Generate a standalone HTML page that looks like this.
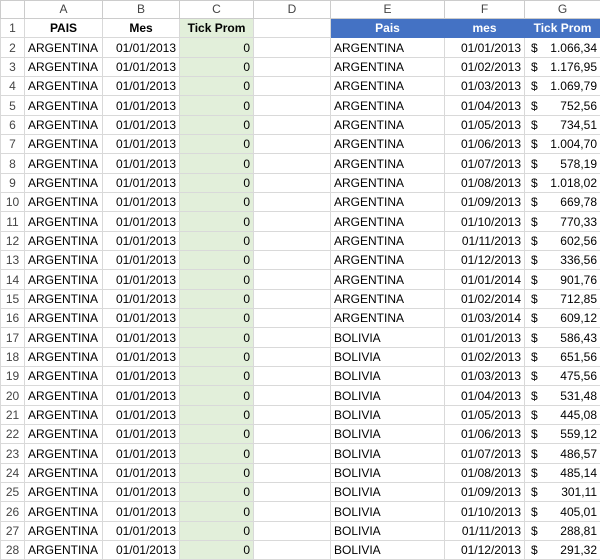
<!DOCTYPE html><html><head><style>
body{margin:0;width:600px;height:551px;overflow:hidden;background:#fff;font-family:"Liberation Sans",Arial,sans-serif;font-size:12px;color:#000}
table{border-collapse:collapse;table-layout:fixed;width:600px}
td{border:1px solid #d9d9d9;padding:0 3px;white-space:nowrap;overflow:hidden;height:18px;line-height:18px}
tr.t td{height:19px}
tr.h td{color:#444;text-align:center;font-size:12px;border-color:#ccc;height:17px;line-height:17px}
td.n{color:#444;text-align:center;font-size:12px;padding:0}
td.r{text-align:right}
td.g{background:#e2efda;text-align:right}
td.b{font-weight:bold;text-align:center}
td.bl{background:#4472c4;color:#fff;font-weight:bold;text-align:center;border-color:#4472c4}
td.d span{float:left;padding-left:3px}
td.d{text-align:right}
</style></head><body>
<table>
<colgroup><col style="width:24px"><col style="width:78px"><col style="width:77px"><col style="width:74px"><col style="width:77px"><col style="width:114px"><col style="width:80px"><col style="width:76px"></colgroup>
<tr class="h"><td></td><td>A</td><td>B</td><td>C</td><td>D</td><td>E</td><td>F</td><td>G</td></tr>
<tr><td class="n">1</td><td class="b">PAIS</td><td class="b">Mes</td><td class="b" style="background:#e2efda">Tick Prom</td><td></td><td class="bl">Pais</td><td class="bl">mes</td><td class="bl">Tick Prom</td></tr>
<tr class="t"><td class="n">2</td><td>ARGENTINA</td><td class="r">01/01/2013</td><td class="g">0</td><td></td><td>ARGENTINA</td><td class="r">01/01/2013</td><td class="d"><span>$</span>1.066,34</td></tr>
<tr><td class="n">3</td><td>ARGENTINA</td><td class="r">01/01/2013</td><td class="g">0</td><td></td><td>ARGENTINA</td><td class="r">01/02/2013</td><td class="d"><span>$</span>1.176,95</td></tr>
<tr><td class="n">4</td><td>ARGENTINA</td><td class="r">01/01/2013</td><td class="g">0</td><td></td><td>ARGENTINA</td><td class="r">01/03/2013</td><td class="d"><span>$</span>1.069,79</td></tr>
<tr class="t"><td class="n">5</td><td>ARGENTINA</td><td class="r">01/01/2013</td><td class="g">0</td><td></td><td>ARGENTINA</td><td class="r">01/04/2013</td><td class="d"><span>$</span>752,56</td></tr>
<tr><td class="n">6</td><td>ARGENTINA</td><td class="r">01/01/2013</td><td class="g">0</td><td></td><td>ARGENTINA</td><td class="r">01/05/2013</td><td class="d"><span>$</span>734,51</td></tr>
<tr><td class="n">7</td><td>ARGENTINA</td><td class="r">01/01/2013</td><td class="g">0</td><td></td><td>ARGENTINA</td><td class="r">01/06/2013</td><td class="d"><span>$</span>1.004,70</td></tr>
<tr class="t"><td class="n">8</td><td>ARGENTINA</td><td class="r">01/01/2013</td><td class="g">0</td><td></td><td>ARGENTINA</td><td class="r">01/07/2013</td><td class="d"><span>$</span>578,19</td></tr>
<tr><td class="n">9</td><td>ARGENTINA</td><td class="r">01/01/2013</td><td class="g">0</td><td></td><td>ARGENTINA</td><td class="r">01/08/2013</td><td class="d"><span>$</span>1.018,02</td></tr>
<tr><td class="n">10</td><td>ARGENTINA</td><td class="r">01/01/2013</td><td class="g">0</td><td></td><td>ARGENTINA</td><td class="r">01/09/2013</td><td class="d"><span>$</span>669,78</td></tr>
<tr class="t"><td class="n">11</td><td>ARGENTINA</td><td class="r">01/01/2013</td><td class="g">0</td><td></td><td>ARGENTINA</td><td class="r">01/10/2013</td><td class="d"><span>$</span>770,33</td></tr>
<tr><td class="n">12</td><td>ARGENTINA</td><td class="r">01/01/2013</td><td class="g">0</td><td></td><td>ARGENTINA</td><td class="r">01/11/2013</td><td class="d"><span>$</span>602,56</td></tr>
<tr><td class="n">13</td><td>ARGENTINA</td><td class="r">01/01/2013</td><td class="g">0</td><td></td><td>ARGENTINA</td><td class="r">01/12/2013</td><td class="d"><span>$</span>336,56</td></tr>
<tr class="t"><td class="n">14</td><td>ARGENTINA</td><td class="r">01/01/2013</td><td class="g">0</td><td></td><td>ARGENTINA</td><td class="r">01/01/2014</td><td class="d"><span>$</span>901,76</td></tr>
<tr><td class="n">15</td><td>ARGENTINA</td><td class="r">01/01/2013</td><td class="g">0</td><td></td><td>ARGENTINA</td><td class="r">01/02/2014</td><td class="d"><span>$</span>712,85</td></tr>
<tr><td class="n">16</td><td>ARGENTINA</td><td class="r">01/01/2013</td><td class="g">0</td><td></td><td>ARGENTINA</td><td class="r">01/03/2014</td><td class="d"><span>$</span>609,12</td></tr>
<tr class="t"><td class="n">17</td><td>ARGENTINA</td><td class="r">01/01/2013</td><td class="g">0</td><td></td><td>BOLIVIA</td><td class="r">01/01/2013</td><td class="d"><span>$</span>586,43</td></tr>
<tr><td class="n">18</td><td>ARGENTINA</td><td class="r">01/01/2013</td><td class="g">0</td><td></td><td>BOLIVIA</td><td class="r">01/02/2013</td><td class="d"><span>$</span>651,56</td></tr>
<tr><td class="n">19</td><td>ARGENTINA</td><td class="r">01/01/2013</td><td class="g">0</td><td></td><td>BOLIVIA</td><td class="r">01/03/2013</td><td class="d"><span>$</span>475,56</td></tr>
<tr class="t"><td class="n">20</td><td>ARGENTINA</td><td class="r">01/01/2013</td><td class="g">0</td><td></td><td>BOLIVIA</td><td class="r">01/04/2013</td><td class="d"><span>$</span>531,48</td></tr>
<tr><td class="n">21</td><td>ARGENTINA</td><td class="r">01/01/2013</td><td class="g">0</td><td></td><td>BOLIVIA</td><td class="r">01/05/2013</td><td class="d"><span>$</span>445,08</td></tr>
<tr><td class="n">22</td><td>ARGENTINA</td><td class="r">01/01/2013</td><td class="g">0</td><td></td><td>BOLIVIA</td><td class="r">01/06/2013</td><td class="d"><span>$</span>559,12</td></tr>
<tr class="t"><td class="n">23</td><td>ARGENTINA</td><td class="r">01/01/2013</td><td class="g">0</td><td></td><td>BOLIVIA</td><td class="r">01/07/2013</td><td class="d"><span>$</span>486,57</td></tr>
<tr><td class="n">24</td><td>ARGENTINA</td><td class="r">01/01/2013</td><td class="g">0</td><td></td><td>BOLIVIA</td><td class="r">01/08/2013</td><td class="d"><span>$</span>485,14</td></tr>
<tr><td class="n">25</td><td>ARGENTINA</td><td class="r">01/01/2013</td><td class="g">0</td><td></td><td>BOLIVIA</td><td class="r">01/09/2013</td><td class="d"><span>$</span>301,11</td></tr>
<tr class="t"><td class="n">26</td><td>ARGENTINA</td><td class="r">01/01/2013</td><td class="g">0</td><td></td><td>BOLIVIA</td><td class="r">01/10/2013</td><td class="d"><span>$</span>405,01</td></tr>
<tr><td class="n">27</td><td>ARGENTINA</td><td class="r">01/01/2013</td><td class="g">0</td><td></td><td>BOLIVIA</td><td class="r">01/11/2013</td><td class="d"><span>$</span>288,81</td></tr>
<tr><td class="n">28</td><td>ARGENTINA</td><td class="r">01/01/2013</td><td class="g">0</td><td></td><td>BOLIVIA</td><td class="r">01/12/2013</td><td class="d"><span>$</span>291,32</td></tr>
</table>
</body></html>
